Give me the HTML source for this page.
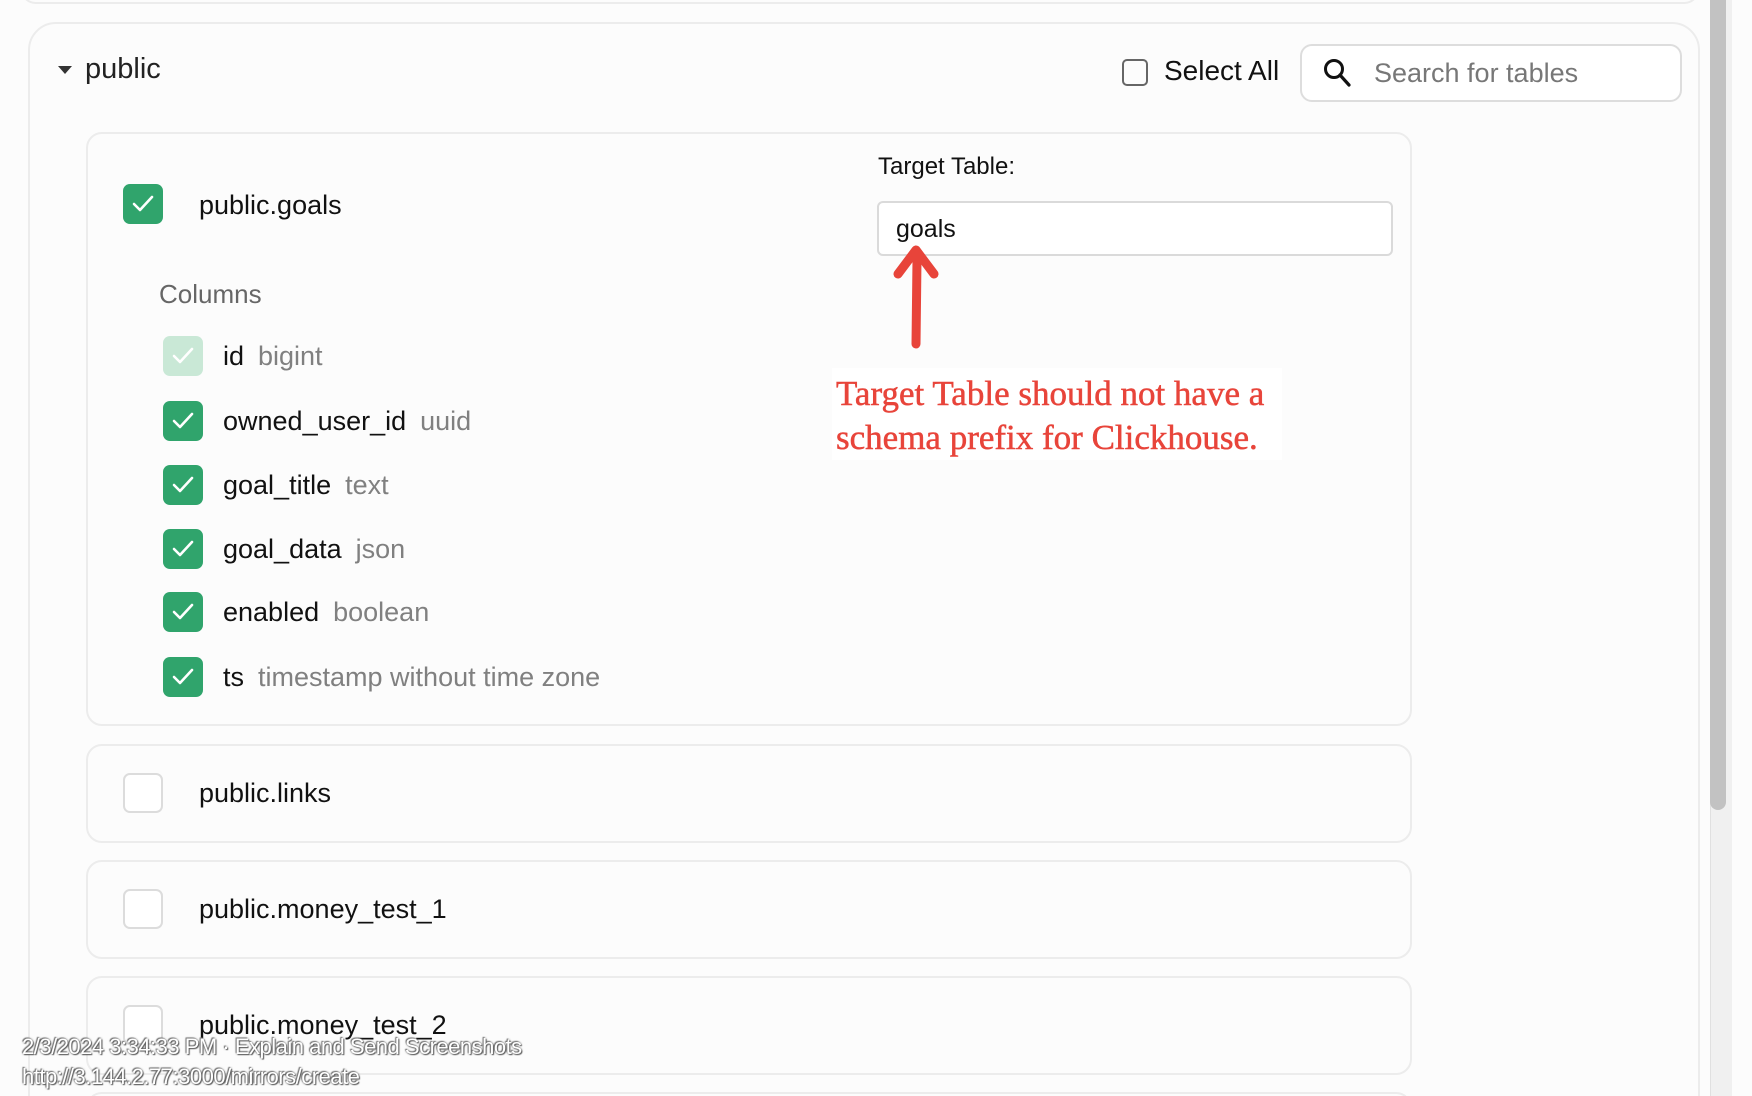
<!DOCTYPE html>
<html style="overflow:hidden;width:1752px;height:1096px"><head><meta charset="utf-8"><style>
*{box-sizing:border-box;margin:0;padding:0}
body{width:1752px;height:1096px;overflow:hidden;background:#fcfcfc;font-family:"Liberation Sans",sans-serif;color:#111}
#w{position:relative;width:1752px;height:1096px;overflow:hidden}
.abs{position:absolute}
.card{position:absolute;border:2px solid #ececec;border-radius:16px;background:#fcfcfc}
.cb{position:absolute;width:40px;height:40px;border-radius:7px;background:#30a46c}
.cb svg{position:absolute;left:9px;top:10px}
.ecb{position:absolute;width:40px;height:40px;border-radius:7px;border:2px solid #dcdcdc;background:#fff}
.t{position:absolute;font-size:27px;line-height:30px;white-space:nowrap}
.g{color:#808080;margin-left:14px}
.ov{position:absolute;left:22px;font-size:22px;color:#fff;white-space:nowrap;text-shadow:0 0 2px #666,1px 1px 1px #555,-1px -1px 1px #777;letter-spacing:-0.5px}
</style></head><body><div id="w">
<div class="card" style="left:20px;top:-40px;width:1680px;height:44px;border-radius:16px"></div>
<div class="card" style="left:28px;top:22px;width:1672px;height:1200px;border-radius:28px"></div>
<div class="abs" style="left:1710px;top:0;width:22px;height:1096px;background:#f0f0f0;border-left:1px solid #e0e0e0"></div>
<div class="abs" style="left:1710px;top:0;width:16px;height:810px;background:#c2c2c2;border-radius:0 0 8px 8px"></div>

<div class="abs" style="left:58px;top:66px;width:0;height:0;border-left:7px solid transparent;border-right:7px solid transparent;border-top:8px solid #333"></div>
<div class="t" style="left:85px;top:54px;font-size:29px;color:#222">public</div>

<div class="abs" style="left:1122px;top:59px;width:26px;height:27px;border:2px solid #666;border-radius:5px"></div>
<div class="t" style="left:1164px;top:56px;font-size:28px">Select All</div>
<div class="abs" style="left:1300px;top:44px;width:382px;height:58px;border:2px solid #ddd;border-radius:12px;background:#fff"></div>
<svg class="abs" style="left:1322px;top:57px" width="32" height="32" viewBox="0 0 32 32"><circle cx="12" cy="12" r="8.5" fill="none" stroke="#111" stroke-width="3"/><path d="M18 18 L27 28" stroke="#111" stroke-width="3.2" stroke-linecap="round"/></svg>
<div class="t" style="left:1374px;top:58px;color:#777;font-size:27px">Search for tables</div>

<div class="card" style="left:86px;top:132px;width:1326px;height:594px"></div>
<div class="cb" style="left:123px;top:184px"><svg width="22" height="20" viewBox="0 0 22 20"><path d="M2 10 L8 16 L20 3" fill="none" stroke="#fff" stroke-width="2.6" stroke-linecap="round" stroke-linejoin="round"/></svg></div>
<div class="t" style="left:199px;top:190px">public.goals</div>
<div class="t" style="left:878px;top:152px;font-size:24px">Target Table:</div>
<div class="abs" style="left:877px;top:201px;width:516px;height:55px;border:2px solid #dadada;border-radius:6px;background:#fff"></div>
<div class="t" style="left:896px;top:214px;font-size:25px">goals</div>
<svg class="abs" style="left:890px;top:240px" width="52" height="110" viewBox="0 0 52 110"><path d="M26 104 L27 20" stroke="#e8443a" stroke-width="9" stroke-linecap="round"/><path d="M8 34 L26 10 L44 34" fill="none" stroke="#e8443a" stroke-width="9" stroke-linecap="round" stroke-linejoin="round"/></svg>
<div class="abs" style="left:832px;top:368px;width:450px;height:92px;background:#fff"></div>
<div class="abs" style="left:836px;top:372px;font-family:'Liberation Serif',serif;font-size:35px;line-height:44px;color:#e8443a;white-space:nowrap;-webkit-text-stroke:0.5px #e8443a">Target Table should not have a<br>schema prefix for Clickhouse.</div>

<div class="t" style="left:159px;top:279px;color:#666;font-size:26px">Columns</div>
<div class="cb" style="left:163px;top:336px;background:#c9e8d6"><svg width="22" height="20" viewBox="0 0 22 20"><path d="M2 10 L8 16 L20 3" fill="none" stroke="#fff" stroke-width="2.6" stroke-linecap="round" stroke-linejoin="round"/></svg></div>
<div class="t" style="left:223px;top:341px">id<span class="g">bigint</span></div>
<div class="cb" style="left:163px;top:401px"><svg width="22" height="20" viewBox="0 0 22 20"><path d="M2 10 L8 16 L20 3" fill="none" stroke="#fff" stroke-width="2.6" stroke-linecap="round" stroke-linejoin="round"/></svg></div>
<div class="t" style="left:223px;top:406px">owned_user_id<span class="g">uuid</span></div>
<div class="cb" style="left:163px;top:465px"><svg width="22" height="20" viewBox="0 0 22 20"><path d="M2 10 L8 16 L20 3" fill="none" stroke="#fff" stroke-width="2.6" stroke-linecap="round" stroke-linejoin="round"/></svg></div>
<div class="t" style="left:223px;top:470px">goal_title<span class="g">text</span></div>
<div class="cb" style="left:163px;top:529px"><svg width="22" height="20" viewBox="0 0 22 20"><path d="M2 10 L8 16 L20 3" fill="none" stroke="#fff" stroke-width="2.6" stroke-linecap="round" stroke-linejoin="round"/></svg></div>
<div class="t" style="left:223px;top:534px">goal_data<span class="g">json</span></div>
<div class="cb" style="left:163px;top:592px"><svg width="22" height="20" viewBox="0 0 22 20"><path d="M2 10 L8 16 L20 3" fill="none" stroke="#fff" stroke-width="2.6" stroke-linecap="round" stroke-linejoin="round"/></svg></div>
<div class="t" style="left:223px;top:597px">enabled<span class="g">boolean</span></div>
<div class="cb" style="left:163px;top:657px"><svg width="22" height="20" viewBox="0 0 22 20"><path d="M2 10 L8 16 L20 3" fill="none" stroke="#fff" stroke-width="2.6" stroke-linecap="round" stroke-linejoin="round"/></svg></div>
<div class="t" style="left:223px;top:662px">ts<span class="g">timestamp without time zone</span></div>

<div class="card" style="left:86px;top:744px;width:1326px;height:99px"></div>
<div class="ecb" style="left:123px;top:773px"></div>
<div class="t" style="left:199px;top:778px">public.links</div>
<div class="card" style="left:86px;top:860px;width:1326px;height:99px"></div>
<div class="ecb" style="left:123px;top:889px"></div>
<div class="t" style="left:199px;top:894px">public.money_test_1</div>
<div class="card" style="left:86px;top:976px;width:1326px;height:99px"></div>
<div class="ecb" style="left:123px;top:1005px"></div>
<div class="t" style="left:199px;top:1010px">public.money_test_2</div>
<div class="card" style="left:86px;top:1092px;width:1326px;height:99px"></div>

<div class="ov" style="top:1034px">2/3/2024 3:34:33 PM · Explain and Send Screenshots</div>
<div class="ov" style="top:1064px">http://3.144.2.77:3000/mirrors/create</div>
</div></body></html>
